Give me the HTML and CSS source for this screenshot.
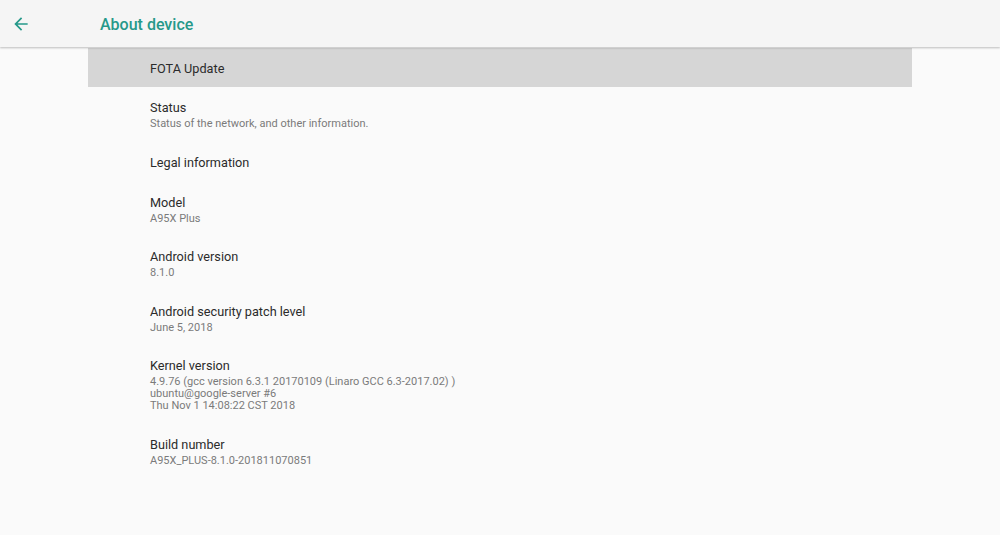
FILE: index.html
```html
<!DOCTYPE html>
<html lang="en">
<head>
    <meta charset="UTF-8">
    <title>About device</title>
    <link rel="stylesheet" href="styles.css">
</head>
<body>
    <header class="toolbar">
        <button class="back-btn" aria-label="Back">
            <svg viewBox="0 0 24 24" width="20" height="20"><path d="M20 11H7.83l5.59-5.59L12 4l-8 8 8 8 1.41-1.41L7.83 13H20v-2z" fill="#26998a"/></svg>
        </button>
        <h1 class="title">About device</h1>
    </header>

    <div class="prefs">
        <div class="pref selected">
            <div class="pref-title">FOTA Update</div>
        </div>
        <div class="pref">
            <div class="pref-title">Status</div>
            <div class="pref-summary">Status of the network, and other information.</div>
        </div>
        <div class="pref">
            <div class="pref-title">Legal information</div>
        </div>
        <div class="pref">
            <div class="pref-title">Model</div>
            <div class="pref-summary">A95X Plus</div>
        </div>
        <div class="pref">
            <div class="pref-title">Android version</div>
            <div class="pref-summary">8.1.0</div>
        </div>
        <div class="pref">
            <div class="pref-title">Android security patch level</div>
            <div class="pref-summary">June 5, 2018</div>
        </div>
        <div class="pref">
            <div class="pref-title">Kernel version</div>
            <div class="pref-summary">4.9.76 (gcc version 6.3.1 20170109 (Linaro GCC 6.3-2017.02) )<br>ubuntu@google-server #6<br>Thu Nov 1 14:08:22 CST 2018</div>
        </div>
        <div class="pref">
            <div class="pref-title">Build number</div>
            <div class="pref-summary">A95X_PLUS-8.1.0-201811070851</div>
        </div>
    </div>
</body>
</html>
```

FILE: styles.css
```css
body {
    font-family: Roboto, 'Liberation Sans', sans-serif;
    margin: 0;
    padding: 0;
    background-color: #fafafa;
    color: #212121;
    height: 535px;
    overflow: hidden;
}

.toolbar {
    height: 47px;
    background-color: #f5f5f5;
    display: flex;
    align-items: center;
    box-shadow: 0 1px 2px rgba(0, 0, 0, 0.25);
    position: relative;
    z-index: 1;
}

.back-btn {
    width: 20px;
    height: 20px;
    margin-left: 11px;
    padding: 0;
    border: none;
    background: none;
    display: flex;
}

.title {
    margin: 0 0 0 69px;
    padding-top: 2px;
    font-size: 16px;
    font-weight: 500;
    color: #26998a;
}

.prefs {
    width: 824px;
    margin: 1px auto 0;
}

.pref {
    padding: 13px 0 11px 62px;
    min-height: 16px;
}

.pref.selected {
    background-color: #d6d6d6;
    padding-bottom: 10px;
}

.pref-title {
    font-size: 12.7px;
    line-height: 16px;
    color: #2b2b2b;
}

.pref-summary {
    font-size: 11px;
    line-height: 12px;
    color: #7a7a7a;
    margin: 2px 0 0.6px;
}
```
